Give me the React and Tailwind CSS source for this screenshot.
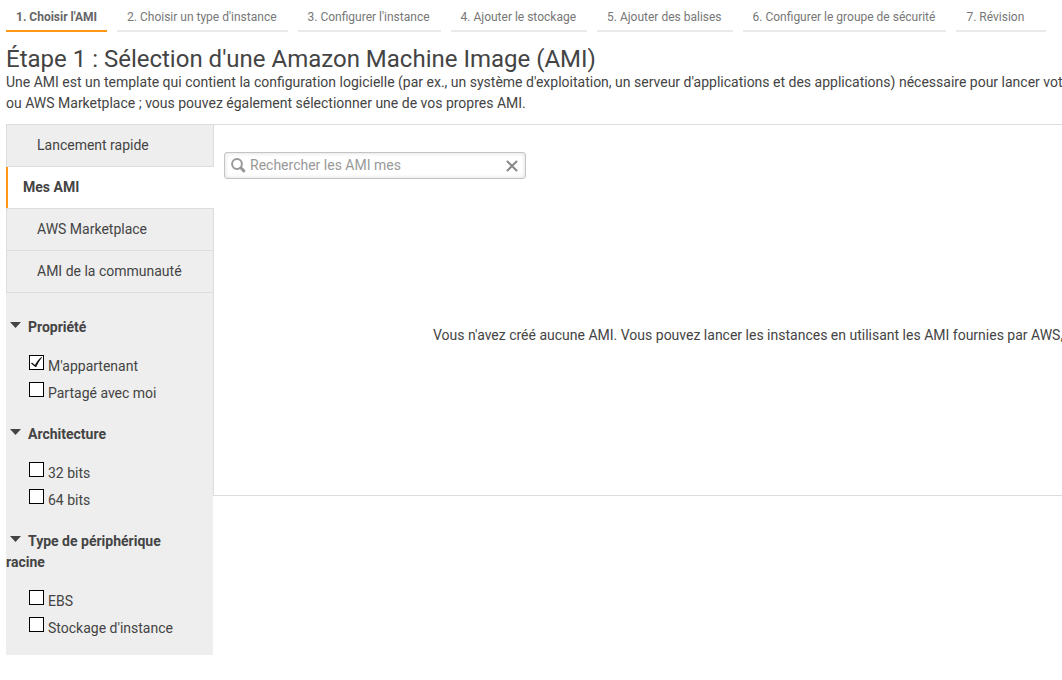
import { useState } from 'react';

const steps = [
  "1. Choisir l'AMI",
  "2. Choisir un type d'instance",
  "3. Configurer l'instance",
  '4. Ajouter le stockage',
  '5. Ajouter des balises',
  '6. Configurer le groupe de sécurité',
  '7. Révision',
];

const sources = ['Lancement rapide', 'Mes AMI', 'AWS Marketplace', 'AMI de la communauté'];

const filters = [
  { title: 'Propriété', options: ["M'appartenant", 'Partagé avec moi'] },
  { title: 'Architecture', options: ['32 bits', '64 bits'] },
  { title: 'Type de périphérique racine', options: ['EBS', "Stockage d'instance"] },
];

function Steps() {
  return (
    <nav className="flex gap-[10px]">
      {steps.map((step, i) => (
        <a
          key={step}
          href="#"
          className={
            i === 0
              ? 'shrink-0 border-b-2 border-[#ff9914] px-[10px] pt-2 pb-1 text-xs leading-[18px] font-bold text-[#666]'
              : 'min-w-[90px] shrink-0 border-b-2 border-[#eaeaea] pr-[11px] pl-[10px] pt-2 pb-1 text-xs leading-[18px] text-[#777]'
          }
        >
          {step}
        </a>
      ))}
    </nav>
  );
}

function Option({ label, defaultChecked }) {
  return (
    <li className="py-[2px]">
      <label className="flex items-start gap-1">
        <span className="relative flex">
          <input
            type="checkbox"
            defaultChecked={defaultChecked}
            className="peer size-[15px] appearance-none border border-black bg-white"
          />
          <svg
            viewBox="0 0 15 15"
            className="pointer-events-none absolute inset-0 hidden size-[15px] peer-checked:block"
            fill="#111"
            aria-hidden="true"
          >
            <path d="M2 8.6 3 7.6 6 10C7.6 6.8 9.6 4.2 12.4 1.9L13 2.6C10.6 5.4 8.9 8.6 7.2 12H6.4Z" />
          </svg>
        </span>
        <span className="leading-[23px]">{label}</span>
      </label>
    </li>
  );
}

function FilterGroup({ title, options }) {
  const [open, setOpen] = useState(true);
  return (
    <section>
      <h2 className="mb-[15px] font-bold">
        <button
          type="button"
          aria-expanded={open}
          onClick={() => setOpen(!open)}
          className="block w-full pr-4 pl-0 text-left"
        >
          <svg viewBox="0 0 11 6" className="mr-[7px] ml-1 mb-[6px] inline h-[6px] w-[11px]" fill="#444" aria-hidden="true">
            <path d="M0 0H11L5.5 6Z" />
          </svg>
          {title}
        </button>
      </h2>
      {open && (
        <ul className="pl-[23px]">
          {options.map((label) => (
            <Option key={label} label={label} defaultChecked={label === "M'appartenant"} />
          ))}
        </ul>
      )}
    </section>
  );
}

function Sidebar() {
  return (
    <aside className="w-[207px] shrink-0 bg-[#eee]">
      <nav className="relative -mr-px border-t border-[#ddd]">
        {sources.map((name) => (
          <a
            key={name}
            href="#"
            className={
              name === 'Mes AMI'
                ? 'block bg-white font-bold shadow-[inset_2px_0_0_#ff9914] border-b border-[#ddd] py-[10px] pl-[17px]'
                : 'block border-x border-b border-[#ddd] bg-[#eee] py-[10px] pl-[30px]'
            }
          >
            {name}
          </a>
        ))}
      </nav>
      <div className="flex flex-col gap-[17px] pt-6 pb-[13px]">
        {filters.map((group) => (
          <FilterGroup key={group.title} title={group.title} options={group.options} />
        ))}
      </div>
    </aside>
  );
}

function Search() {
  return (
    <div className="flex h-[27px] w-[302px] items-center rounded-[3px] border border-[#c4c4c4] bg-white pr-[7px] pl-[6px] shadow-[inset_0_0_4px_rgba(0,0,0,0.15)]">
      <svg viewBox="0 0 15 15" className="size-[15px] shrink-0" fill="none" stroke="#999" aria-hidden="true">
        <circle cx="6" cy="6" r="4.9" strokeWidth="2" />
        <path d="M9.8 9.8 12.8 12.9" strokeWidth="3" strokeLinecap="round" />
      </svg>
      <input
        type="text"
        aria-label="Rechercher les AMI mes"
        placeholder="Rechercher les AMI mes"
        className="min-w-0 flex-1 bg-transparent px-1 leading-[21px] outline-none placeholder:text-[#999]"
      />
      <button type="button" aria-label="Effacer">
        <svg viewBox="0 0 12 12" className="size-3" fill="none" stroke="#888" strokeWidth="2" strokeLinecap="round">
          <path d="M1.5 1.5 10.5 10.5M10.5 1.5 1.5 10.5" />
        </svg>
      </button>
    </div>
  );
}

export default function App() {
  return (
    <div className="overflow-hidden pl-[6px] font-['Roboto',sans-serif] text-sm leading-[21px] text-[#444]">
      <Steps />
      <header className="mt-[15px] mb-[10px]">
        <h1 className="pb-px text-2xl leading-6">Étape 1 : Sélection d'une Amazon Machine Image (AMI)</h1>
        <p className="whitespace-nowrap">
          Une AMI est un template qui contient la configuration logicielle (par ex., un système d'exploitation, un
          serveur d'applications et des applications) nécessaire pour lancer votre
          <br />
          ou AWS Marketplace ; vous pouvez également sélectionner une de vos propres AMI.
        </p>
      </header>
      <div className="flex items-start">
        <Sidebar />
        <main className="min-w-0 flex-1 border-y border-l border-[#ddd] pt-[27px] pb-[149px] pl-[10px]">
          <Search />
          <p className="mt-[146px] pl-[209px] whitespace-nowrap">
            Vous n'avez créé aucune AMI. Vous pouvez lancer les instances en utilisant les AMI fournies par AWS, n
          </p>
        </main>
      </div>
    </div>
  );
}
